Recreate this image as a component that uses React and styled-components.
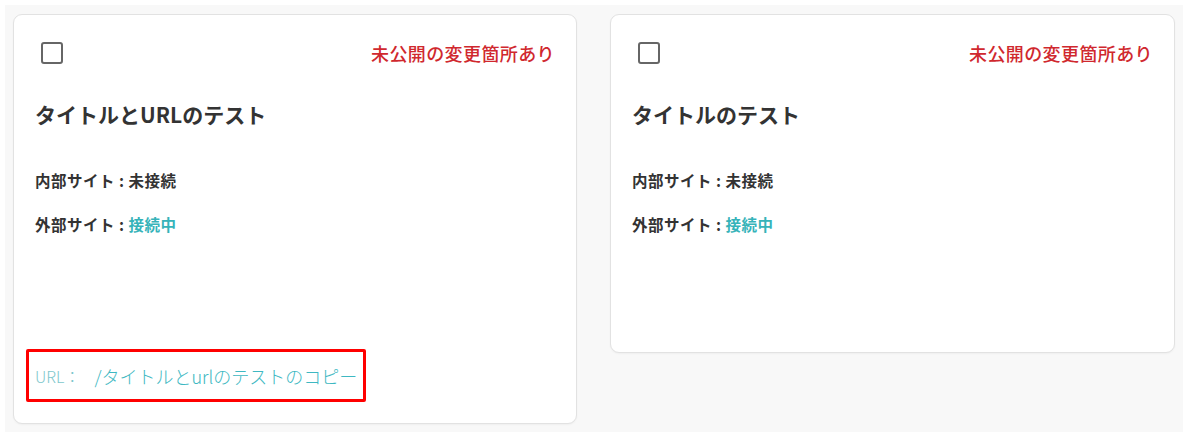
import React from "react";
import styled, { createGlobalStyle } from "styled-components";

const GlobalStyle = createGlobalStyle`
  html, body {
    margin: 0;
    padding: 0;
    background: #ffffff;
  }
  body {
    font-family: "Noto Sans CJK JP", "Noto Sans", sans-serif;
    color: #333333;
  }
`;

const Page = styled.div`
  margin: 5px;
  width: 1178px;
  height: 427px;
  box-sizing: border-box;
  background: #f8f8f8;
  padding: 9px 8px;
  display: grid;
  grid-template-columns: 564px 565px;
  column-gap: 33px;
  align-items: start;
`;

const Card = styled.div`
  background: #ffffff;
  border: 1px solid #e2e2e2;
  border-radius: 9px;
  box-shadow: 0 1px 2px rgba(0, 0, 0, 0.04);
  box-sizing: border-box;
  padding: 26px 21px 21px 21px;
  display: flex;
  flex-direction: column;
`;

const Header = styled.div`
  display: flex;
  align-items: center;
  justify-content: space-between;
  height: 24px;
`;

const Checkbox = styled.span`
  display: inline-block;
  width: 22px;
  height: 22px;
  margin-left: 6px;
  box-sizing: border-box;
  border: 2px solid #666666;
  border-radius: 3px;
`;

const Unpublished = styled.span`
  color: #d0282e;
  font-size: 18px;
  font-weight: 500;
  letter-spacing: 0.4px;
`;

const Title = styled.h2`
  margin: 34px 0 0;
  font-size: 21px;
  font-weight: 700;
  line-height: 30px;
  color: #333333;
`;

const Info = styled.dl`
  margin: 41px 0 0;
  display: flex;
  flex-direction: column;
  gap: 23px;
  min-height: 161px;
`;

const InfoRow = styled.div`
  font-size: 15.5px;
  font-weight: 700;
  line-height: 21px;
  letter-spacing: 0.5px;
  color: #333333;
  white-space: pre;
`;

const Label = styled.dt`
  display: inline;
  margin: 0;
`;

const Value = styled.dd`
  display: inline;
  margin: 0;
  color: ${(p) => (p.$connected ? "#36b3b9" : "#333333")};
`;

const UrlBox = styled.div`
  margin: 18px 0 0 -9px;
  width: 340px;
  height: 53px;
  box-sizing: border-box;
  border: 3px solid #ff0000;
  border-radius: 2px;
  padding: 0 0 0 6px;
  display: flex;
  align-items: center;
  font-weight: 300;
  color: #3eb8c2;
`;

const UrlLabel = styled.span`
  font-size: 16px;
  color: #7dc7cc;
  margin-right: 14px;
`;

const UrlPath = styled.span`
  font-size: 18px;
`;

const cards = [
  { title: "タイトルとURLのテスト", url: "/タイトルとurlのテストのコピー" },
  { title: "タイトルのテスト" },
];

export default function App() {
  return (
    <>
      <GlobalStyle />
      <Page>
        {cards.map((c) => (
          <Card key={c.title}>
            <Header>
              <Checkbox />
              <Unpublished>未公開の変更箇所あり</Unpublished>
            </Header>
            <Title>{c.title}</Title>
            <Info>
              <InfoRow>
                <Label>内部サイト : </Label>
                <Value>未接続</Value>
              </InfoRow>
              <InfoRow>
                <Label>外部サイト : </Label>
                <Value $connected>接続中</Value>
              </InfoRow>
            </Info>
            {c.url && (
              <UrlBox>
                <UrlLabel>URL：</UrlLabel>
                <UrlPath>{c.url}</UrlPath>
              </UrlBox>
            )}
          </Card>
        ))}
      </Page>
    </>
  );
}
